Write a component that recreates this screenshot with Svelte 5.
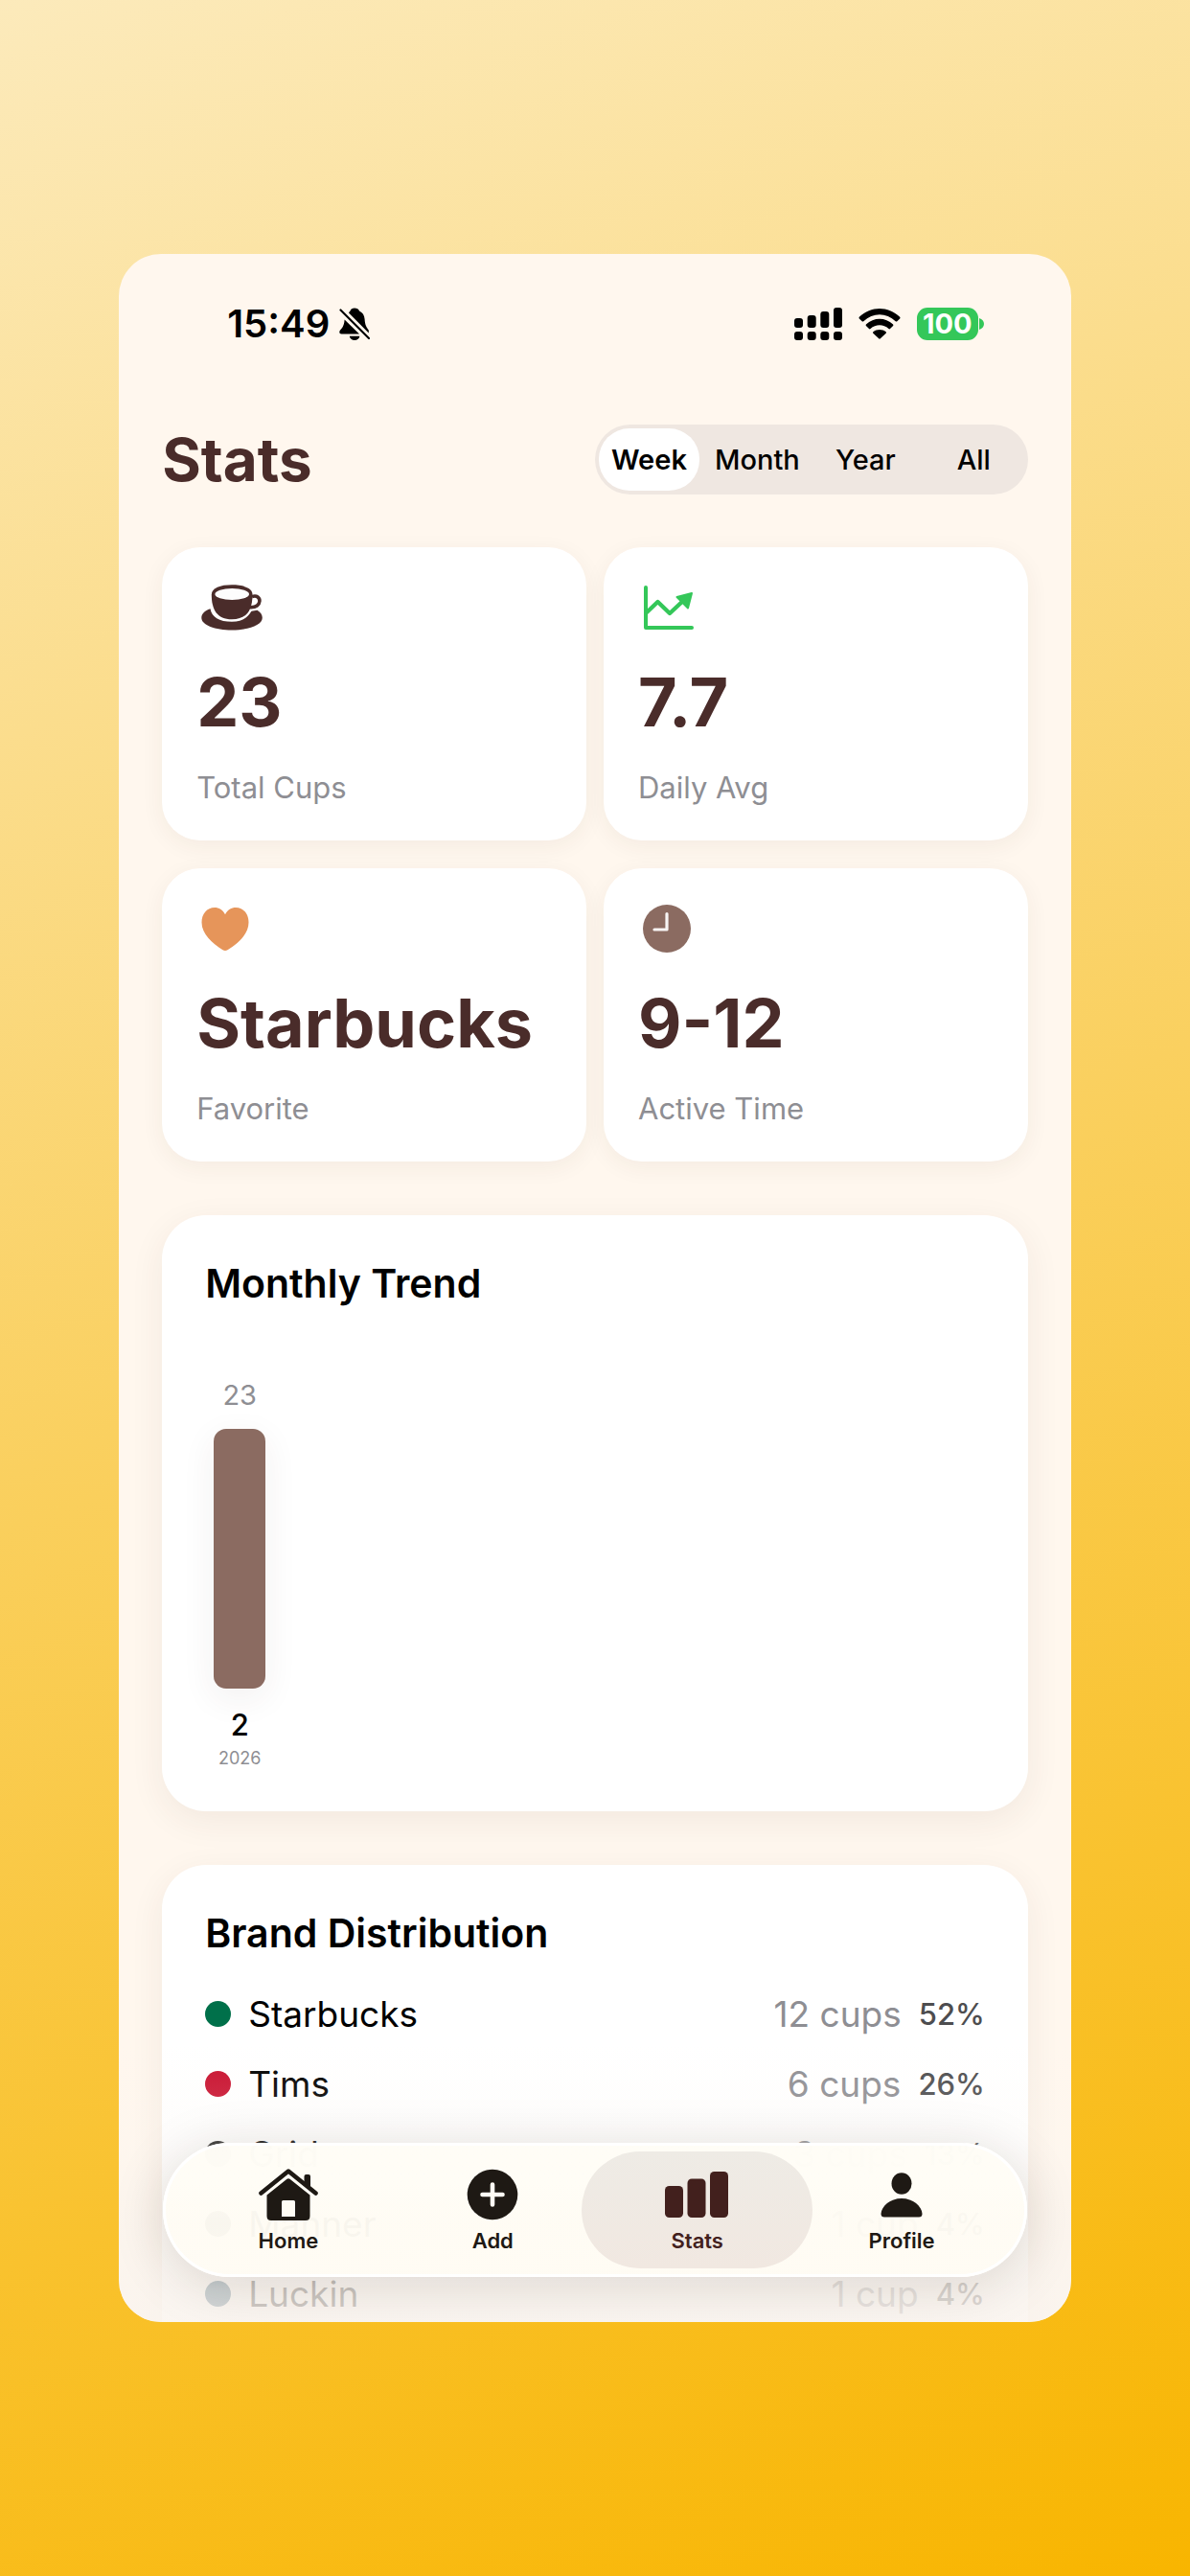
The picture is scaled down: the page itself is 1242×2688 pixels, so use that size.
<script lang="ts">
  type Period = "Week" | "Month" | "Year" | "All";

  interface Stat {
    icon: "cup" | "chart" | "heart" | "clock";
    value: string;
    label: string;
  }

  interface Brand {
    name: string;
    cups: number;
    percent: number;
    color: string;
  }

  const periods: Period[] = ["Week", "Month", "Year", "All"];
  let period = $state<Period>("Week");

  const stats: Stat[] = [
    { icon: "cup", value: "23", label: "Total Cups" },
    { icon: "chart", value: "7.7", label: "Daily Avg" },
    { icon: "heart", value: "Starbucks", label: "Favorite" },
    { icon: "clock", value: "9-12", label: "Active Time" },
  ];

  const months = [{ month: 2, year: 2026, cups: 23 }];
  const maxCups = Math.max(...months.map((m) => m.cups));

  const brands: Brand[] = [
    { name: "Starbucks", cups: 12, percent: 52, color: "#00704a" },
    { name: "Tims", cups: 6, percent: 26, color: "#c8102e" },
    { name: "Grid", cups: 3, percent: 13, color: "#1a1a1a" },
    { name: "Manner", cups: 1, percent: 4, color: "#2b2b2b" },
    { name: "Luckin", cups: 1, percent: 4, color: "#0b3f5f" },
  ];

  const tabs = ["Home", "Add", "Stats", "Profile"];
  let activeTab = $state("Stats");
</script>

<div class="page">
  <main class="screen">
    <div class="status-bar">
      <div class="status-left">
        <span class="time">15:49</span>
        <svg width="32" height="34" viewBox="0 0 32 34" aria-label="Silent">
          <path d="M16 0.500C18.500 0.500 20.500 1.700 21 3.600C24.500 5.200 26.300 8 26.600 12C27 18.500 28.500 20.500 30.800 23.500V26.500L10 5.600C10.500 4.800 11 4 11.500 3.600C12 1.700 13.500 0.500 16 0.500Z" />
          <path d="M5.600 12.500L21 27.600H2.500C0.800 27.600 0 26.500 0.400 24.800C0.800 23 5.200 21 5.600 12.500Z" />
          <path d="M10.800 29.800H21.400C21 32.400 19 34 16.100 34C13.200 34 11.200 32.400 10.800 29.800Z" />
          <path d="M1.500 2.500L31 32" stroke="#000" stroke-width="2.200" stroke-linecap="round" />
        </svg>
      </div>
      <div class="status-right">
        <svg width="50" height="34" viewBox="0 0 50 34" aria-label="Signal">
          <rect x="0" y="11" width="9" height="10" rx="3" />
          <rect x="13.700" y="8" width="9" height="13" rx="3" />
          <rect x="27.300" y="4" width="9" height="17" rx="3" />
          <rect x="41" y="0" width="9" height="21" rx="3" />
          <rect x="0" y="25" width="9" height="9" rx="3" />
          <rect x="13.700" y="25" width="9" height="9" rx="3" />
          <rect x="27.300" y="25" width="9" height="9" rx="3" />
          <rect x="41" y="25" width="9" height="9" rx="3" />
        </svg>
        <svg width="44" height="34" viewBox="0 0 44 34" aria-label="Wi-Fi">
          <path d="M0.800 9.800C13 -2 31 -2 43.200 9.800Q43.800 10.600 43.200 11.400L40.300 14.200Q39.500 14.900 38.700 14.200C29 5 15 5 5.300 14.200Q4.500 14.900 3.700 14.200L0.800 11.400Q0.200 10.600 0.800 9.800Z" />
          <path d="M7.900 17.600C16 9.900 28 9.900 36.100 17.600Q36.700 18.400 36.100 19.100L33 22.100Q32.300 22.700 31.500 22.100C26 17.100 18 17.100 12.500 22.100Q11.700 22.700 11 22.100L7.900 19.100Q7.300 18.400 7.900 17.600Z" />
          <path d="M15.300 25.300C19 22.200 25 22.200 28.700 25.300Q29.300 26 28.700 26.700L22.800 32.300Q22 33 21.200 32.300L15.300 26.700Q14.700 26 15.300 25.300Z" />
        </svg>
        <div class="battery">
          <span class="battery-level">100</span>
          <svg width="5" height="12" viewBox="0 0 5 12" aria-hidden="true">
            <path d="M0 0C3 1 5 3 5 6C5 9 3 11 0 12Z" fill="#34c759" />
          </svg>
        </div>
      </div>
    </div>

    <header class="title-row">
      <h1>Stats</h1>
      <div class="segmented" role="group" aria-label="Period">
        {#each periods as p (p)}
          <button class:selected={period === p} aria-pressed={period === p} onclick={() => (period = p)}>
            {p}
          </button>
        {/each}
      </div>
    </header>

    <section class="stat-grid" aria-label="Summary">
      {#each stats as stat (stat.label)}
        <article class="card stat">
          <div class="stat-icon">
            {#if stat.icon === "cup"}
              <svg width="64" height="48" viewBox="0 0 64 48" fill="#4a2c2a" aria-hidden="true">
                <path d="M9.500 25.200C10.800 33.800 18.800 38.800 32 38.800C44 38.800 48.500 33.800 52.500 27.800L58.500 26.800C62 28.800 63.800 31.600 63.800 34.700C63.800 42 49.500 47.500 32 47.500C14.500 47.500 0.300 42 0.300 34.700C0.300 30.500 3.500 27.300 9.500 25.200Z" />
                <path d="M53 12.600C63.500 9 64.500 25 50.500 23.600" fill="none" stroke="#4a2c2a" stroke-width="3.600" />
                <path d="M10.800 10.500C10.800 3.500 20 0.300 32 0.300C44 0.300 53.500 3.500 53.500 10.500C53.500 26 48 36.300 32 36.300C16.500 36.300 10.800 26 10.800 10.500Z" />
                <ellipse cx="32.200" cy="10" rx="17.800" ry="6" fill="#fdfdfd" />
              </svg>
            {:else if stat.icon === "chart"}
              <svg width="54" height="48" viewBox="0 0 54 48" fill="none" stroke="#34c759" stroke-width="4" stroke-linecap="round" stroke-linejoin="round" aria-hidden="true">
                <path d="M3 3V45H51" />
                <path d="M4 29L15.500 18L28 30L43 16" stroke-width="4.400" />
                <path d="M35.500 13L51 9L47 24.500Z" fill="#34c759" stroke-width="2" />
              </svg>
            {:else if stat.icon === "heart"}
              <svg width="50" height="48" viewBox="0 0 50 48" fill="#e6955a" aria-hidden="true">
                <path d="M25 9.200C22.500 4.500 18.500 2 14 2C6 2 0.500 8.500 0.500 17.500C0.500 29.500 11.500 39.500 22.500 46.300Q25 47.800 27.500 46.300C38.500 39.500 49.500 29.500 49.500 17.500C49.500 8.500 44 2 36 2C31.500 2 27.500 4.500 25 9.200Z" />
              </svg>
            {:else}
              <svg width="50" height="50" viewBox="0 0 50 50" aria-hidden="true">
                <circle cx="25" cy="25" r="25" fill="#8b6b61" />
                <path d="M25 9.500V26H12" fill="none" stroke="#f7f4f3" stroke-width="3.200" stroke-linecap="round" stroke-linejoin="round" />
              </svg>
            {/if}
          </div>
          <strong class="stat-value">{stat.value}</strong>
          <span class="stat-label">{stat.label}</span>
        </article>
      {/each}
    </section>

    <section class="card panel trend">
      <h2>Monthly Trend</h2>
      <div class="bars">
        {#each months as m (m.month)}
          <div class="bar-column">
            <span class="bar-value">{m.cups}</span>
            <div class="bar-track">
              <div class="bar" style="height: {(m.cups / maxCups) * 100}%"></div>
            </div>
            <span class="bar-month">{m.month}</span>
            <span class="bar-year">{m.year}</span>
          </div>
        {/each}
      </div>
    </section>

    <section class="card panel brands">
      <h2>Brand Distribution</h2>
      <ul>
        {#each brands as brand (brand.name)}
          <li>
            <span class="dot" style="background: {brand.color}"></span>
            <span class="brand-name">{brand.name}</span>
            <span class="brand-cups">{brand.cups} {brand.cups === 1 ? "cup" : "cups"}</span>
            <span class="brand-percent">{brand.percent}%</span>
          </li>
        {/each}
      </ul>
    </section>

    <div class="fade"></div>

    <nav class="tab-bar" aria-label="Main">
      {#each tabs as tab (tab)}
        <button class="tab" class:active={activeTab === tab} onclick={() => (activeTab = tab)}>
          <svg width="68" height="56" viewBox="0 0 68 56" fill="currentColor" aria-hidden="true">
            {#if tab === "Home"}
              <path d="M5.500 26.500L34 3.500L62.500 26.500" fill="none" stroke="currentColor" stroke-width="4.600" stroke-linecap="round" stroke-linejoin="round" />
              <path d="M50.500 18V9Q50.500 7 52.500 7H55Q57 7 57 9V23Z" />
              <path fill-rule="evenodd" d="M32.500 11.800Q34 10.800 35.500 11.800L56.500 28.500V50.500Q56.500 55 52 55H16Q11.500 55 11.500 50.500V28.500ZM28.500 34Q27 34 27 35.500V51H41V35.500Q41 34 39.500 34Z" />
            {:else if tab === "Add"}
              <circle cx="34" cy="28" r="26.300" />
              <path d="M34 17.500V38.500M23.500 28H44.500" stroke="#fffcf5" stroke-width="4.600" stroke-linecap="round" />
            {:else if tab === "Stats"}
              <rect x="0" y="19" width="19" height="33" rx="4.500" />
              <rect x="23.500" y="11.500" width="19" height="40.500" rx="4.500" />
              <rect x="47" y="4" width="19" height="48" rx="4.500" />
            {:else}
              <ellipse cx="34" cy="16.500" rx="10.500" ry="11.300" />
              <path d="M16 51.500Q12.500 51.500 12.500 48C13 40 22 32 34 32C46 32 55 40 55.500 48Q55.500 51.500 52 51.500Z" />
            {/if}
          </svg>
          <span>{tab}</span>
        </button>
      {/each}
    </nav>
  </main>
</div>

<style>
  :global(body) {
    margin: 0;
  }

  .page {
    box-sizing: border-box;
    height: 100vh;
    padding: 265px 10%;
    display: flex;
    background: linear-gradient(160deg, #fceabb 0%, #f8b500 100%);
    font-family: Inter, "Liberation Sans", sans-serif;
    color: #000;
  }

  .screen {
    position: relative;
    flex: 1;
    min-width: 0;
    padding: 0 45px;
    box-sizing: border-box;
    display: flex;
    flex-direction: column;
    gap: 56px;
    overflow: hidden;
    border-radius: 44px;
    background: #fff7ee;
  }

  .screen > * {
    flex-shrink: 0;
  }

  button {
    border: 0;
    padding: 0;
    background: none;
    font-family: inherit;
    color: inherit;
    cursor: pointer;
  }

  h1,
  h2 {
    margin: 0;
  }

  svg {
    display: block;
  }

  /* Status bar */
  .status-bar {
    display: flex;
    justify-content: space-between;
    align-items: center;
    padding: 48px 46px 0 68px;
    line-height: 50px;
  }

  .status-left {
    display: flex;
    align-items: center;
    gap: 10px;
  }

  .time {
    font-size: 40px;
    font-weight: 600;
  }

  .status-right {
    display: flex;
    align-items: center;
    gap: 17px;
  }

  .battery {
    display: flex;
    align-items: center;
    gap: 1px;
  }

  .battery-level {
    width: 64px;
    border-radius: 11px;
    background: #34c759;
    color: #fff;
    font-size: 29px;
    font-weight: 700;
    line-height: 34px;
    text-align: center;
  }

  /* Title and period switch */
  .title-row {
    display: flex;
    justify-content: space-between;
    align-items: center;
    padding-top: 28px;
    margin: -4px 0 -1px;
  }

  h1 {
    color: #4a2c2a;
    font-size: 62px;
    font-weight: 700;
    line-height: 72px;
  }

  .segmented {
    display: grid;
    grid-template-columns: repeat(4, 1fr);
    width: 50%;
    border-radius: 37px;
    background: #efe7e1;
  }

  .segmented button {
    margin: 4px;
    border-radius: 32px;
    font-size: 29px;
    font-weight: 500;
    line-height: 65px;
  }

  .segmented .selected {
    background: #fff;
    font-weight: 600;
  }

  /* Cards */
  .card {
    background: #fff;
    box-shadow: 0 6px 24px rgba(74, 44, 42, 0.06);
  }

  .stat-grid {
    display: grid;
    grid-template-columns: 1fr 1fr;
    gap: 29px 18px;
  }

  .stat {
    display: flex;
    flex-direction: column;
    gap: 27px;
    padding: 33px 36px 35px;
    border-radius: 40px;
  }

  .stat-icon {
    display: flex;
    align-items: center;
    height: 60px;
    padding-left: 5px;
  }

  .stat-value {
    color: #4a2c2a;
    font-size: 70px;
    font-weight: 700;
    line-height: 84px;
  }

  .stat-label {
    color: #8e8e93;
    font-size: 31px;
    line-height: 40px;
  }

  .panel {
    padding: 45px 45px 43px;
    border-radius: 46px;
    box-shadow: 0 10px 36px rgba(74, 44, 42, 0.07);
  }

  h2 {
    font-size: 41px;
    font-weight: 600;
    line-height: 52px;
  }

  /* Monthly trend */
  .bars {
    display: flex;
    padding-top: 73px;
  }

  .bar-column {
    display: flex;
    flex-direction: column;
    align-items: center;
    width: 72px;
  }

  .bar-value {
    color: #8e8e93;
    font-size: 29px;
    line-height: 36px;
  }

  .bar-track {
    display: flex;
    align-items: flex-end;
    width: 54px;
    height: 271px;
    margin: 17px 0 20px;
  }

  .bar {
    width: 100%;
    border-radius: 13px;
    background: #8b6b61;
    box-shadow: 0 10px 36px rgba(74, 44, 42, 0.07);
  }

  .bar-month {
    font-size: 31px;
    font-weight: 500;
    line-height: 36px;
  }

  .bar-year {
    margin-top: 5px;
    color: #8e8e93;
    font-size: 18px;
    line-height: 24px;
  }

  /* Brand distribution */
  ul {
    list-style: none;
    margin: 22px 0 0;
    padding: 0;
  }

  li {
    display: flex;
    align-items: center;
    line-height: 73px;
    font-size: 37px;
  }

  .dot {
    width: 27px;
    height: 27px;
    border-radius: 50%;
  }

  .brand-name {
    flex: 1;
    margin-left: 18px;
  }

  .brand-cups {
    color: #8e8e93;
  }

  .brand-percent {
    margin-left: 18px;
    color: #4d4d4f;
    font-size: 31px;
    font-weight: 500;
  }

  .fade {
    position: absolute;
    inset: auto 0 0;
    height: 290px;
    background: linear-gradient(
      rgba(250, 244, 238, 0) 0%,
      rgba(250, 244, 238, 0.2) 35%,
      rgba(250, 244, 238, 0.8) 88%,
      rgba(250, 244, 238, 0.85) 100%
    );
  }

  .tab-bar {
    position: absolute;
    inset: auto 46px 47px;
    display: grid;
    grid-template-columns: repeat(4, 1fr);
    padding: 9px 24px;
    border-radius: 70px;
    background: linear-gradient(rgba(255, 253, 246, 0.99) 30%, rgba(255, 252, 244, 0.94) 60%);
    box-shadow:
      inset 0 0 0 3px #fff,
      0 8px 56px rgba(40, 25, 15, 0.15);
  }

  .tab {
    position: relative;
    display: flex;
    flex-direction: column;
    align-items: center;
    gap: 6px;
    padding: 17px 0 15px;
    color: #1e1914;
    font-size: 22px;
    font-weight: 600;
    line-height: 28px;
  }

  .tab > * {
    position: relative;
  }

  .tab.active {
    color: #42201d;
  }

  .tab.active::before {
    content: "";
    position: absolute;
    inset: 0 -14px;
    border-radius: 61px;
    background: linear-gradient(#eeebe5, #f1e8e1);
  }
</style>
